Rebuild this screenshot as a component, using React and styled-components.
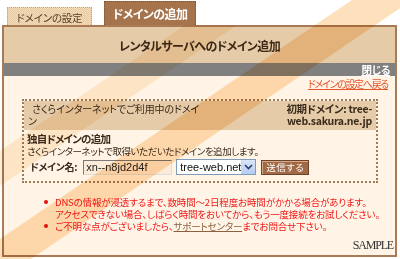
import styled, { createGlobalStyle } from "styled-components"

const GlobalStyle = createGlobalStyle`
  html, body {
    margin: 0;
    padding: 0;
    background: #fff;
  }
  body {
    font-family: "Noto Sans CJK JP", sans-serif;
    font-feature-settings: "palt" 1;
    color: #3a2a1c;
  }
`

const Page = styled.div`
  position: relative;
  width: 400px;
  height: 259px;
  overflow: hidden;
  display: flex;
  flex-direction: column;
`
const Tabs = styled.div`
  display: flex;
  align-items: flex-end;
  gap: 12px;
  height: 25px;
  padding-left: 7px;
`
const Tab = styled.div`
  box-sizing: border-box;
  display: flex;
  align-items: center;
  justify-content: center;
  width: ${p => (p.$active ? 92 : 85)}px;
  height: ${p => (p.$active ? 24 : 18)}px;
  padding-top: ${p => (p.$active ? 0 : 2)}px;
  font-size: ${p => (p.$active ? 12 : 10.5)}px;
  letter-spacing: ${p => (p.$active ? -0.6 : -0.2)}px;
  font-weight: ${p => (p.$active ? 700 : 400)};
  color: ${p => (p.$active ? "#fff" : "#5a3e26")};
  background: ${p =>
    p.$active
      ? "#a5744c"
      : "repeating-conic-gradient(#f4ddbb 0 25%, #e7caa2 0 50%) 0 0 / 2px 2px"};
  border: 1px dotted ${p => (p.$active ? "#7e5434" : "#c9a27c")};
  border-bottom: none;
`
const Panel = styled.div`
  flex: 1;
  display: flex;
  flex-direction: column;
  margin: 0 3px 2px 2px;
  border: 2px solid #a87a56;
  background: #fff4e5;
`
const Title = styled.div`
  height: 36px;
  display: flex;
  align-items: center;
  justify-content: center;
  background: #e5cba7;
  font-size: 12px;
  font-weight: 700;
  letter-spacing: -0.6px;
  color: #3c2816;
`
const CloseBar = styled.div`
  height: 13px;
  background: #808080;
  display: flex;
  justify-content: flex-end;
  align-items: center;
  padding-right: 5px;
`
const CloseLink = styled.a`
  font-size: 10.5px;
  line-height: 12px;
  letter-spacing: -0.4px;
  font-weight: 700;
  color: #fff;
  text-decoration: underline;
`
const Body = styled.div`
  flex: 1;
  display: flex;
  flex-direction: column;
  padding: 0 7px 3px 18px;
`
const BackLink = styled.a`
  align-self: flex-end;
  margin-top: 2px;
  font-size: 10px;
  line-height: 12px;
  letter-spacing: -1.3px;
  color: #e4572e;
  text-decoration: underline;
`
const Box = styled.div`
  margin: 9px 10px 0 0;
  border: 2px dotted #9e7d5c;
  font-size: 10px;
  line-height: 12px;
`
const BoxHead = styled.div`
  display: flex;
  justify-content: space-between;
  padding: 2px 4px 3px 4px;
  background: #e5cba7;
`
const Current = styled.div`
  width: 174px;
  text-indent: 4px;
  letter-spacing: -0.1px;
`
const Initial = styled.div`
  width: 92px;
  text-align: right;
  font-weight: 700;
  font-size: 10.5px;
  letter-spacing: -0.3px;
`
const BoxBody = styled.div`
  padding: 3px 4px 6px 3px;
`
const Heading = styled.div`
  font-weight: 700;
  font-size: 10.5px;
  letter-spacing: -0.75px;
`
const Desc = styled.div`
  font-size: 9.5px;
  letter-spacing: -0.45px;
`
const FormRow = styled.div`
  display: flex;
  align-items: center;
  gap: 4px;
  margin-top: 2px;
  padding-left: 3px;
`
const Label = styled.span`
  font-weight: 700;
  letter-spacing: -0.3px;
  margin-right: 2px;
`
const Input = styled.input`
  box-sizing: border-box;
  width: 89px;
  height: 15px;
  padding: 0 2px;
  border: 1px solid #7a7a7a;
  border-right-color: #ddd;
  border-bottom-color: #ddd;
  background: #fcebd8;
  font-family: "Liberation Sans", sans-serif;
  font-size: 11px;
  color: #222;
`
const Select = styled.div`
  box-sizing: border-box;
  display: flex;
  align-items: center;
  justify-content: space-between;
  width: 80px;
  height: 16px;
  border: 1px solid #7f9db9;
  background: #fff;
  font-family: "Liberation Sans", sans-serif;
  font-size: 11px;
  white-space: nowrap;
  color: #111;
  padding-left: 3px;
`
const Arrow = styled.span`
  display: flex;
  align-items: center;
  justify-content: center;
  width: 13px;
  height: 14px;
  background: linear-gradient(#dbe6fb, #b5cbf4);
  border-left: 1px solid #c5d5f2;
`
const Submit = styled.button`
  box-sizing: border-box;
  height: 15px;
  margin-left: 1px;
  padding: 0 4px;
  border: 1px solid #6e4428;
  box-shadow: inset 1px 1px 0 #d7a88a;
  background: #a06a46;
  color: #fff;
  font-family: "Noto Sans CJK JP", sans-serif;
  font-feature-settings: "palt" 1;
  font-size: 9.5px;
  letter-spacing: 0.4px;
  line-height: 12px;
`
const Notes = styled.ul`
  list-style: none;
  margin: 13px 0 0;
  padding: 0 0 0 33px;
  font-size: 9.5px;
  line-height: 12px;
  letter-spacing: -0.15px;
  color: #f01818;
`
const Note = styled.li`
  position: relative;
  white-space: nowrap;
  &::before {
    content: "";
    position: absolute;
    left: -11px;
    top: 4px;
    width: 4px;
    height: 4px;
    border-radius: 50%;
    background: #e81010;
  }
`
const Support = styled.a`
  color: #8c6040;
  text-decoration: underline;
`
const Sample = styled.div`
  margin-top: auto;
  align-self: flex-end;
  margin-right: -5px;
  font-family: "Liberation Serif", serif;
  font-size: 12px;
  line-height: 14px;
  letter-spacing: -1.2px;
  color: #333;
`
const Bands = styled.svg`
  position: absolute;
  inset: 0;
  pointer-events: none;
  mix-blend-mode: multiply;
`

const App = () => {
  return (
    <Page>
      <GlobalStyle />
      <Tabs>
        <Tab>ドメインの設定</Tab>
        <Tab $active>ドメインの追加</Tab>
      </Tabs>
      <Panel>
        <Title>レンタルサーバへのドメイン追加</Title>
        <CloseBar>
          <CloseLink>閉じる</CloseLink>
        </CloseBar>
        <Body>
          <BackLink>ドメインの設定へ戻る</BackLink>
          <Box>
            <BoxHead>
              <Current>さくらインターネットでご利用中のドメイン</Current>
              <Initial>初期ドメイン: tree-web.sakura.ne.jp</Initial>
            </BoxHead>
            <BoxBody>
              <Heading>独自ドメインの追加</Heading>
              <Desc>さくらインターネットで取得いただいたドメインを追加します。</Desc>
              <FormRow>
                <Label>ドメイン名:</Label>
                <Input defaultValue="xn--n8jd2d4f" />
                <Select>
                  tree-web.net
                  <Arrow>
                    <svg width="9" height="6" viewBox="0 0 9 6">
                      <path d="M1 1 L4.5 4.5 L8 1" fill="none" stroke="#2c3e6a" strokeWidth="1.6" />
                    </svg>
                  </Arrow>
                </Select>
                <Submit>送信する</Submit>
              </FormRow>
            </BoxBody>
          </Box>
          <Notes>
            <Note>
              DNSの情報が浸透するまで、数時間〜2日程度お時間がかかる場合があります。
              <br />
              アクセスできない場合、しばらく時間をおいてから、もう一度接続をお試しください。
            </Note>
            <Note>
              ご不明な点がございましたら、<Support>サポートセンター</Support>までお問合せ下さい。
            </Note>
          </Notes>
          <Sample>SAMPLE</Sample>
        </Body>
      </Panel>
      <Bands width="400" height="259" viewBox="0 0 400 259">
        <polygon points="185,25 237,25 0,186 0,151" fill="#fdefdc" />
        <polygon points="352,0 412,0 31,259 0,259 0,239" fill="#fde0bc" />
      </Bands>
    </Page>
  )
}

export default App
